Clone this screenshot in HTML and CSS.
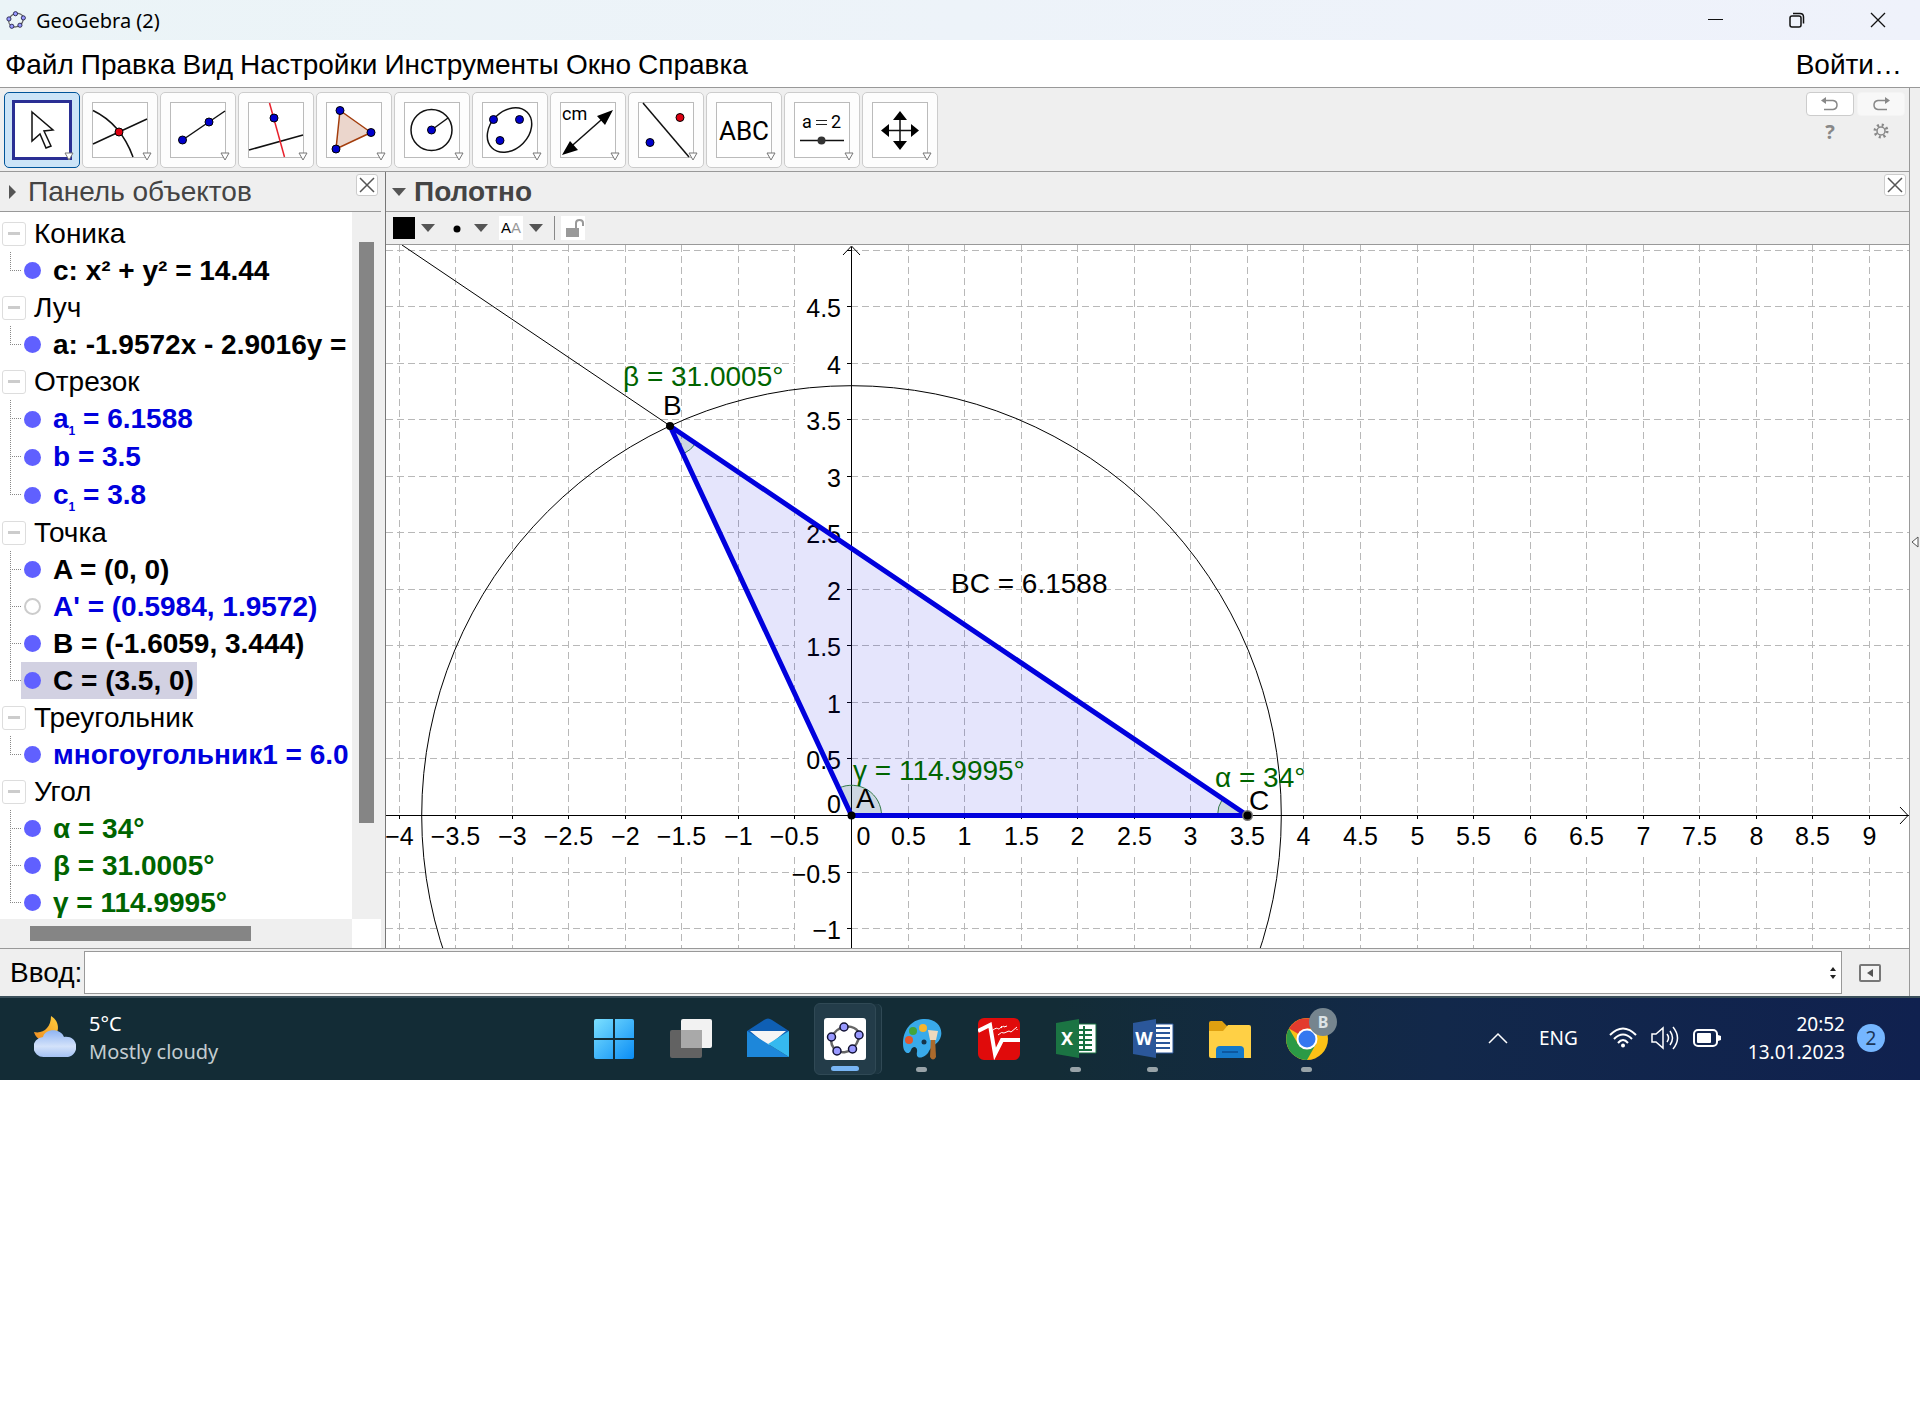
FILE: index.html
```html
<!DOCTYPE html>
<html lang="ru">
<head>
  <meta charset="UTF-8" />
  <meta name="viewport" content="width=device-width, initial-scale=1.0"/>
  <title>GeoGebra (2)</title>
  <link rel="stylesheet" href="styles.css">
</head>
<body>
  <svg class="defs" width="0" height="0" aria-hidden="true">
    <symbol id="logo" viewBox="0 0 42 42">
      <path d="M20 9C27 7 35 11 35 17C35 23 31 29 28 31C24 35 17 35 13 33C8 30 6 24 8 19C10 14 15 10 20 9Z" fill="none" stroke="#666" stroke-width="2.5"/>
      <g fill="#9999ff" stroke="#111133" stroke-width="1.5">
        <circle cx="20" cy="9" r="4"/><circle cx="35" cy="17" r="4"/><circle cx="28.500" cy="31" r="4"/><circle cx="13" cy="33" r="4"/><circle cx="7.500" cy="19" r="4"/>
      </g>
    </symbol>
    <symbol id="more" viewBox="0 0 10 9">
      <path d="M1 1H9L5 8Z" fill="#fff" stroke="#777"/>
    </symbol>
    <symbol id="cross" viewBox="0 0 20 20">
      <path d="M3 3L17 17M17 3L3 17" stroke="#555" stroke-width="1.500" fill="none"/>
    </symbol>
  </svg>

  <div class="app">
    <!-- Window title -->
    <header class="titlebar">
      <svg class="title-logo" viewBox="0 0 42 42"><use href="#logo"/></svg>
      <span class="title">GeoGebra (2)</span>
      <div class="window-buttons">
        <button aria-label="Свернуть"><svg width="16" height="16"><path d="M0 7.5H15" stroke="#111"/></svg></button>
        <button aria-label="Окно"><svg width="16" height="16" fill="none" stroke="#111" stroke-width="1.500"><rect x="1" y="4" width="11" height="11" rx="2"/><path d="M4 1.500H11Q14.500 1.500 14.500 5V11.500"/></svg></button>
        <button aria-label="Закрыть"><svg width="16" height="16" stroke="#111" stroke-width="1.300"><path d="M1 1L15 15M15 1L1 15"/></svg></button>
      </div>
    </header>

    <nav class="menu">
      <a href="#file">Файл</a>
      <a href="#edit">Правка</a>
      <a href="#view">Вид</a>
      <a href="#options">Настройки</a>
      <a href="#tools">Инструменты</a>
      <a href="#window">Окно</a>
      <a href="#help">Справка</a>
      <a href="#login" class="login">Войти…</a>
    </nav>

    <div class="body">
      <div class="main">
        <!-- Tools -->
        <div class="toolbar">
          <button class="tool selected" aria-label="Перемещать">
            <svg viewBox="0 0 60 60"><rect x="1.500" y="1.500" width="57" height="57" fill="#fff" stroke="#2a2f94" stroke-width="3"/>
              <path d="M20 12L41 30L32 31L39 46L34 48L28 34L20 41Z" fill="#fff" stroke="#111" stroke-width="1.500"/>
              <use href="#more" x="52" y="52" width="10" height="9"/></svg>
          </button>
          <button class="tool" aria-label="Точка">
            <svg viewBox="0 0 60 60"><rect class="frame" x="2.500" y="2.500" width="55" height="55"/>
              <path class="ink" d="M3 10.500Q31 24 43 57M3 44L57 19"/><circle class="red" cx="29" cy="32" r="4"/>
              <use href="#more" x="52" y="52" width="10" height="9"/></svg>
          </button>
          <button class="tool" aria-label="Прямая">
            <svg viewBox="0 0 60 60"><rect class="frame" x="2.500" y="2.500" width="55" height="55"/>
              <path class="ink" d="M14.500 40L57 11"/><circle class="blue" cx="14.500" cy="40" r="4"/><circle class="blue" cx="41" cy="22" r="4"/>
              <use href="#more" x="52" y="52" width="10" height="9"/></svg>
          </button>
          <button class="tool" aria-label="Перпендикуляр">
            <svg viewBox="0 0 60 60"><rect class="frame" x="2.500" y="2.500" width="55" height="55"/>
              <path class="ink" d="M3 50L57 35"/><path d="M23.500 3L38.500 57" stroke="#e8202c" stroke-width="1.500"/><circle class="blue" cx="28" cy="18" r="4"/>
              <use href="#more" x="52" y="52" width="10" height="9"/></svg>
          </button>
          <button class="tool" aria-label="Многоугольник">
            <svg viewBox="0 0 60 60"><rect class="frame" x="2.500" y="2.500" width="55" height="55"/>
              <path d="M16 10.500L47 32.500L12 49Z" fill="#ebd6cc" stroke="#a33d0c" stroke-width="1.500"/>
              <circle class="blue" cx="16" cy="10.500" r="4"/><circle class="blue" cx="47" cy="32.500" r="4"/><circle class="blue" cx="12" cy="49" r="4"/>
              <use href="#more" x="52" y="52" width="10" height="9"/></svg>
          </button>
          <button class="tool" aria-label="Окружность">
            <svg viewBox="0 0 60 60"><rect class="frame" x="2.500" y="2.500" width="55" height="55"/>
              <circle class="ink" cx="29.500" cy="30" r="20.500"/><path class="ink" d="M29.500 30L46 18"/><circle class="blue" cx="29.500" cy="30" r="4"/>
              <use href="#more" x="52" y="52" width="10" height="9"/></svg>
          </button>
          <button class="tool" aria-label="Эллипс">
            <svg viewBox="0 0 60 60"><rect class="frame" x="2.500" y="2.500" width="55" height="55"/>
              <ellipse class="ink" cx="29.500" cy="30" rx="25" ry="19" transform="rotate(-45 29.500 30)"/>
              <circle class="blue" cx="13.500" cy="19.500" r="4"/><circle class="blue" cx="39.500" cy="19.500" r="4"/><circle class="blue" cx="20" cy="40.500" r="4"/>
              <use href="#more" x="52" y="52" width="10" height="9"/></svg>
          </button>
          <button class="tool" aria-label="Расстояние">
            <svg viewBox="0 0 60 60"><rect class="frame" x="2.500" y="2.500" width="55" height="55"/>
              <text class="small" x="4" y="20">cm</text>
              <path class="ink" d="M8 51L51 13"/><path d="M4 55L12 41L20 50ZM55 10L39 16L47 25Z"/>
              <use href="#more" x="52" y="52" width="10" height="9"/></svg>
          </button>
          <button class="tool" aria-label="Отражение">
            <svg viewBox="0 0 60 60"><rect class="frame" x="2.500" y="2.500" width="55" height="55"/>
              <path class="ink" d="M7 3L53 57"/><circle class="red" cx="44" cy="17.500" r="4"/><circle class="blue" cx="14" cy="42.500" r="4"/>
              <use href="#more" x="52" y="52" width="10" height="9"/></svg>
          </button>
          <button class="tool" aria-label="Текст">
            <svg viewBox="0 0 60 60"><rect class="frame" x="2.500" y="2.500" width="55" height="55"/>
              <text class="big" x="30" y="40">ABC</text>
              <use href="#more" x="52" y="52" width="10" height="9"/></svg>
          </button>
          <button class="tool" aria-label="Ползунок">
            <svg viewBox="0 0 60 60"><rect class="frame" x="2.500" y="2.500" width="55" height="55"/>
              <text class="small" x="10" y="28">a</text><text class="small" x="39" y="28">2</text><path d="M24 20.500H35M24 24.500H35" stroke="#222"/>
              <path class="ink" d="M8 40.500H52"/><circle cx="29.500" cy="40.500" r="4" fill="#333"/>
              <use href="#more" x="52" y="52" width="10" height="9"/></svg>
          </button>
          <button class="tool" aria-label="Переместить чертёж">
            <svg viewBox="0 0 60 60"><rect class="frame" x="2.500" y="2.500" width="55" height="55"/>
              <path class="ink" d="M30 14V47M14 30.500H46"/><path d="M30 11L37 20H23ZM30 50L37 41H23ZM11 30.500L19 24V37ZM49 30.500L41 24V37Z"/>
              <use href="#more" x="52" y="52" width="10" height="9"/></svg>
          </button>

          <div class="actions">
            <button class="undo" aria-label="Отменить"><svg width="18" height="16" fill="none" stroke="#888" stroke-width="1.500"><path d="M3 4.500H12Q16 5 16 9Q16 13 12 13.500H3"/><path d="M0 4.500L5 1V8Z" fill="#888" stroke="none"/></svg></button>
            <button class="redo" aria-label="Повторить"><svg width="18" height="16" fill="none" stroke="#888" stroke-width="1.500"><path d="M14 4.500H6Q2 5 2 9Q2 13 6 13.500H15"/><path d="M18 4.500L13 1V8Z" fill="#888" stroke="none"/></svg></button>
            <button class="help" aria-label="Помощь">?</button>
            <button aria-label="Параметры"><svg width="16" height="16" fill="none" stroke="#888"><circle cx="8" cy="8" r="4" stroke-width="1.500"/><circle cx="8" cy="8" r="6" stroke-width="3" stroke-dasharray="2 2.710"/></svg></button>
          </div>
        </div>

        <div class="workspace">
          <!-- Object list -->
          <section class="objects">
            <div class="panel-head">
              <button class="fold" aria-label="Свернуть панель"><svg width="8" height="16"><path d="M1 1L8 8L1 15Z" fill="#555"/></svg></button>
              <h2>Панель объектов</h2>
              <button class="close" aria-label="Закрыть панель"><svg><use href="#cross"/></svg></button>
            </div>
            <div class="tree-area">
              <div class="tree">
                <h3><button aria-label="Свернуть группу"></button>Коника</h3>
                <ul>
                  <li><i></i>c: x² + y² = 14.44</li>
                </ul>
                <h3><button aria-label="Свернуть группу"></button>Луч</h3>
                <ul>
                  <li><i></i>a: -1.9572x - 2.9016y =</li>
                </ul>
                <h3><button aria-label="Свернуть группу"></button>Отрезок</h3>
                <ul class="segments def">
                  <li><i></i>a<sub>1</sub>&nbsp;= 6.1588</li>
                  <li><i></i>b = 3.5</li>
                  <li><i></i>c<sub>1</sub>&nbsp;= 3.8</li>
                </ul>
                <h3><button aria-label="Свернуть группу"></button>Точка</h3>
                <ul>
                  <li><i></i>A = (0, 0)</li>
                  <li class="def"><i class="off"></i>A' = (0.5984, 1.9572)</li>
                  <li><i></i>B = (-1.6059, 3.444)</li>
                  <li><span class="current"><i></i>C = (3.5, 0)</span></li>
                </ul>
                <h3><button aria-label="Свернуть группу"></button>Треугольник</h3>
                <ul class="def">
                  <li><i></i>многоугольник1 = 6.0</li>
                </ul>
                <h3><button aria-label="Свернуть группу"></button>Угол</h3>
                <ul class="angle">
                  <li><i></i>α = 34°</li>
                  <li><i></i>β = 31.0005°</li>
                  <li><i></i>γ = 114.9995°</li>
                </ul>
              </div>
              <div class="scroll-y"><div class="thumb"></div></div>
              <div class="scroll-x"><div class="thumb"></div></div>
            </div>
          </section>

          <!-- Drawing -->
          <section class="graphics">
            <div class="panel-head">
              <button class="fold" aria-label="Стиль"><svg width="14" height="8"><path d="M0 0H14L7 8Z" fill="#555"/></svg></button>
              <h2>Полотно</h2>
              <button class="close" aria-label="Закрыть полотно"><svg><use href="#cross"/></svg></button>
            </div>
            <div class="stylebar">
              <button aria-label="Цвет"><svg width="22" height="22"><rect width="22" height="22"/></svg><svg width="14" height="8"><path d="M0 0H14L7 8Z" fill="#555"/></svg></button>
              <button aria-label="Стиль точки"><svg width="22" height="22"><circle cx="11" cy="12" r="3.500"/></svg><svg width="14" height="8"><path d="M0 0H14L7 8Z" fill="#555"/></svg></button>
              <button aria-label="Шрифт"><span class="font-icon">A<b>A</b></span><svg width="14" height="8"><path d="M0 0H14L7 8Z" fill="#555"/></svg></button>
              <button class="lock" aria-label="Закрепить"><svg width="24" height="24"><path d="M5 12H18V21H5Z" fill="#999"/><path d="M15 12V7Q15 4 18.500 4Q22 4 22 7V10" fill="none" stroke="#999" stroke-width="2"/></svg></button>
            </div>
            <svg class="plot">
              <g id="grid"></g>
              <g id="ticks"></g>
              <g id="labels"></g>
              <path class="axis" d="M465.500 2V703M457 10L465.500 1L474 10"/>
              <line class="axis" x1="0" y1="570.500" x2="100%" y2="570.500"/>
              <svg x="100%" y="562" width="1" height="18" overflow="visible"><path class="axis" d="M-9 0L-1 8.500L-9 17"/></svg>
              <circle class="thin" cx="465.500" cy="570.500" r="429.800"/>
              <path class="thin" d="M861.500 570.500L16 0"/>
              <path class="triangle" d="M465.500 570.500L861.500 570.500L284 181Z"/>
              <g class="angles">
                <path d="M465.500 570.500H495.500A30 30 0 0 0 453 543Z"/>
                <path d="M284 181L297 209A31 31 0 0 0 310 198Z"/>
                <path d="M861.500 570.500H831.500A30 30 0 0 1 836.500 554Z"/>
              </g>
              <path class="sides" d="M465.500 570.500L861.500 570.500L284 181Z"/>
              <circle cx="861.500" cy="570.500" r="5.500" fill="#777"/>
              <circle cx="861.500" cy="570.500" r="4"/>
              <circle cx="465.500" cy="570.500" r="4"/>
              <circle cx="284" cy="181" r="4"/>
              <g class="names">
                <text x="277" y="170">B</text>
                <text x="470" y="563">A</text>
                <text x="863" y="565">C</text>
                <text x="565" y="348">BC = 6.1588</text>
                <g fill="#006400">
                  <text x="237" y="141">β = 31.0005°</text>
                  <text x="467" y="535">γ = 114.9995°</text>
                  <text x="829" y="542">α = 34°</text>
                </g>
              </g>
            </svg>
          </section>
        </div>

        <form class="inputbar">
          <label for="command">Ввод:</label>
          <div class="field">
            <input type="text" id="command">
            <button type="button" aria-label="История"><svg width="8" height="14"><path d="M4 1L7 5H1ZM4 13L7 9H1Z" fill="#222"/></svg></button>
          </div>
          <button type="button" class="input-help" aria-label="Справка по командам"><svg width="22" height="18"><rect x="1" y="1" width="20" height="16" rx="1" fill="#f4f4f4" stroke="#777" stroke-width="2"/><path d="M8 9L14 5V13Z" fill="#555"/></svg></button>
        </form>
      </div>
      <aside class="side"><button aria-label="Показать панель"><svg width="8" height="12"><path d="M7 1V11L1 6Z" fill="#fff" stroke="#555"/></svg></button></aside>
    </div>

    <!-- Taskbar -->
    <footer class="taskbar">
      <div class="weather">
        <svg width="42" height="46" viewBox="0 0 42 46">
          <defs>
            <linearGradient id="moon" x1="0" y1="1" x2="1" y2="0"><stop offset="0" stop-color="#ee8a20"/><stop offset="1" stop-color="#ffcf3d"/></linearGradient>
            <linearGradient id="cloud" x1="0" y1="0" x2="0" y2="1"><stop offset="0" stop-color="#8fb4f2"/><stop offset=".6" stop-color="#d3e2fa"/><stop offset="1" stop-color="#a4c2f4"/></linearGradient>
          </defs>
          <path d="M17 1C27 7 26 20 16 25C9 28 2 24 0 17C9 19 17 13 17 1Z" fill="url(#moon)"/>
          <path d="M10 42A10 10 0 0 1 9 22C11 13 27 13 30 22C46 20 46 42 32 42Z" fill="url(#cloud)"/>
        </svg>
        <div>5°C<br><span>Mostly cloudy</span></div>
      </div>

      <div class="apps">
        <button aria-label="Start"><svg viewBox="0 0 42 42"><defs><linearGradient id="win" x1="0" y1="0" x2="1" y2="1"><stop offset="0" stop-color="#7be0ff"/><stop offset="1" stop-color="#0a8df5"/></linearGradient></defs><path d="M1 3Q1 1 3 1H20V20H1ZM22 1H39Q41 1 41 3V20H22ZM1 22H20V41H3Q1 41 1 39ZM22 22H41V39Q41 41 39 41H22Z" fill="url(#win)"/></svg></button>
        <button aria-label="Task view"><svg viewBox="0 0 42 42"><rect x="11" y="1" width="31" height="29" rx="2" fill="#f2f2f2"/><rect y="12" width="32" height="28" rx="2" fill="#626262"/><path d="M11 12H32V30H11Z" fill="#a9a9a9"/></svg></button>
        <button aria-label="Mail"><svg viewBox="0 0 42 42"><path d="M0 13L17 2Q21 -1 25 2L42 13V20H0Z" fill="#0f5fb4"/><path d="M3 13H39L21 28Z" fill="#f5f5f5"/><path d="M0 13L42 39H0Z" fill="#1d87da"/><path d="M42 13V39L21 26Z" fill="#35b9ef"/></svg></button>
        <button class="active" aria-label="GeoGebra"><svg viewBox="0 0 42 42"><rect width="42" height="42" rx="3" fill="#fff"/><use href="#logo"/></svg></button>
        <button class="running" aria-label="Paint"><svg viewBox="0 0 42 42"><path d="M22 1C35 0 42 9 40 18C38 26 31 27 28 33C25 40 14 43 16 34C17 29 12 27 10 32C8 38 2 35 2 26C2 12 10 2 22 1Z" fill="#39aaea"/><circle cx="12" cy="13" r="4" fill="#42a53b"/><circle cx="22" cy="10" r="4" fill="#f5b52e"/><circle cx="8" cy="22" r="4" fill="#e4572d"/><circle cx="23" cy="24" r="2.500" fill="#15344a"/><path d="M30 19H34L35 39Q32 44 29 39Z" fill="#aa6a2c"/><path d="M27 12L37 13L35 22H29Z" fill="#eed9bd"/></svg></button>
        <button aria-label="PDF"><svg viewBox="0 0 42 42"><rect width="42" height="42" rx="6" fill="#e00b0b"/><path d="M0 13L12 7L17 36L24 22H42" fill="none" stroke="#fff" stroke-width="4"/><path d="M15 12Q19 9 20 11Q21 12 24 8M23 10Q26 7 26 9L29 8M20 17Q24 13 26 15L31 13L33 14L39 9M39 11V12" fill="none" stroke="#fff"/></svg></button>
        <button class="running" aria-label="Excel"><svg viewBox="0 0 42 42"><path d="M22 6H41V35H22Z" fill="#fff" stroke="#187040"/><path d="M24 12H37M24 17H37M24 22H37M24 27H37M24 32H37M29 8V33" stroke="#187040" stroke-width="2"/><path d="M1 5L24 1V40L1 36Z" fill="#1b7443"/><text x="12" y="27">X</text></svg></button>
        <button class="running" aria-label="Word"><svg viewBox="0 0 42 42"><path d="M22 6H41V35H22Z" fill="#fff" stroke="#2a5699"/><path d="M24 10H38M24 15H38M24 20H38M24 25H38M24 30H38" stroke="#2a5699" stroke-width="2"/><path d="M1 5L24 1V40L1 36Z" fill="#2b579a"/><text x="12" y="27">W</text></svg></button>
        <button aria-label="Explorer"><svg viewBox="0 0 42 42"><path d="M0 5Q0 3 2 3H13L18 8H26V16H0Z" fill="#dfa010"/><path d="M0 13H14L19 7H40Q42 7 42 9V40H2Q0 40 0 38Z" fill="#ffd045"/><path d="M7 40V32Q7 28 11 28H31Q35 28 35 32V40Z" fill="#1579c9"/><path d="M13 34H29" stroke="#0c58a0" stroke-width="2"/></svg></button>
        <button class="running" aria-label="Chrome"><svg viewBox="0 0 42 42"><circle cx="21" cy="21" r="21" fill="#fbc116"/><path d="M21 21L3 10.500A21 21 0 0 1 39.200 10.500H21Z" fill="#e33b2e"/><path d="M3 10.500A21 21 0 0 0 21 42L30 26H12Z" fill="#2b9a46"/><circle cx="21" cy="21" r="10.500" fill="#fff"/><circle cx="21" cy="21" r="8.500" fill="#3478f0"/></svg><span class="profile">B</span></button>
      </div>

      <div class="tray">
        <button aria-label="Hidden icons"><svg width="20" height="12" fill="none" stroke="#fff" stroke-width="1.500"><path d="M1 11L10 2L19 11"/></svg></button>
        <button class="lang">ENG</button>
        <button class="status" aria-label="Network, volume, battery">
          <svg width="28" height="22" fill="none" stroke="#fff" stroke-width="2"><path d="M1 8Q14 -5 27 8M5 12Q14 3 23 12M9 16Q14 10 19 16"/><circle cx="14" cy="18.500" r="2" fill="#fff" stroke="none"/></svg>
          <svg width="28" height="24" fill="none" stroke="#fff" stroke-width="1.500"><path d="M1 8H5L12 2V22L5 16H1ZM16 8Q19 12 16 16M19 5Q24 12 19 19M22 1Q31 12 22 23"/></svg>
          <svg width="28" height="18"><rect x="1" y="1" width="23" height="16" rx="4" fill="none" stroke="#fff" stroke-width="2"/><rect x="4" y="4" width="14" height="10" rx="1" fill="#fff"/><path d="M25 6L28 7V11L25 12Z" fill="#fff"/></svg>
        </button>
        <div class="clock">20:52<br>13.01.2023</div>
        <span class="count">2</span>
      </div>
    </footer>
  </div>

  <script>
    const NS = 'http://www.w3.org/2000/svg';
    const grid = document.getElementById('grid');
    const ticks = document.getElementById('ticks');
    const labels = document.getElementById('labels');
    const ox = 465, oy = 570, unit = 113.1, bottom = 703;

    function line(parent, x1, y1, x2, y2) {
      const el = document.createElementNS(NS, 'line');
      el.setAttribute('x1', x1);
      el.setAttribute('y1', y1);
      el.setAttribute('x2', x2);
      el.setAttribute('y2', y2);
      parent.appendChild(el);
    }

    function label(value, x, y, anchor) {
      const el = document.createElementNS(NS, 'text');
      el.setAttribute('x', x);
      el.setAttribute('y', y);
      el.setAttribute('text-anchor', anchor);
      el.textContent = String(value).replace('-', '−');
      labels.appendChild(el);
    }

    // vertical lines leave a gap for the numbers under the axis
    for (let v = -4; v <= 9; v += 0.5) {
      const x = Math.round(ox + v * unit) + 0.5;
      if (v === 0) {
        label(0, x + 12, 600, 'middle');
        continue;
      }
      line(grid, x, 0, x, oy);
      line(grid, x, 612, x, bottom);
      line(ticks, x, oy, x, oy + 4);
      label(v, x, 600, 'middle');
    }

    for (let v = -1; v <= 5; v += 0.5) {
      const y = Math.round(oy - v * unit) + 0.5;
      if (v === 0) {
        label(0, ox - 10, y - 3, 'end');
        continue;
      }
      line(grid, 0, y, 409, y);
      line(grid, ox, y, '100%', y);
      line(ticks, ox - 4, y, ox, y);
      if (v < 5) label(v, ox - 10, y + 10, 'end');
    }
  </script>
</body>
</html>
```
FILE: styles.css
```css
* {
  margin: 0;
  padding: 0;
  box-sizing: border-box;
}

body {
  background: #fff;
  color: #000;
  font-family: "Liberation Sans", Arial, sans-serif;
  font-size: 28px;
}

button {
  background: none;
  border: none;
  font: inherit;
  color: inherit;
}

svg {
  display: block;
}

.defs {
  position: absolute;
}

.titlebar {
  display: flex;
  align-items: center;
  height: 40px;
  padding-left: 5px;
  background: linear-gradient(90deg, #ebf4f7, #eff2fb);
  font-family: "Noto Sans", sans-serif;
  font-size: 20px;
}

.title-logo {
  width: 22px;
  height: 22px;
  margin-right: 9px;
}

.window-buttons {
  display: flex;
  margin-left: auto;
}

.window-buttons button {
  display: flex;
  justify-content: center;
  width: 81px;
}

.window-buttons button:last-child {
  margin-right: 2px;
}

.menu {
  display: flex;
  align-items: center;
  gap: 7px;
  height: 48px;
  padding: 2px 18px 0 5px;
  border-bottom: 1px solid #999;
}

.menu a {
  color: #000;
  text-decoration: none;
}

.menu .login {
  margin-left: auto;
}

.body {
  display: flex;
  background: #efefef;
}

.main {
  flex: 1;
  min-width: 0;
}

.side {
  display: flex;
  align-items: center;
  justify-content: center;
  width: 11px;
  border-left: 1px solid #999;
}

/* tools */
.toolbar {
  display: flex;
  gap: 2px;
  height: 84px;
  padding: 4px;
  border-bottom: 1px solid #999;
}

.tool {
  width: 76px;
  height: 76px;
  padding: 7px;
  background: #fdfdfd;
  border: 1px solid #ccc;
  border-radius: 5px;
}

.tool.selected {
  background: #cce4f7;
  border-color: #005499;
}

.tool svg {
  width: 60px;
  height: 60px;
  overflow: visible;
}

.frame {
  fill: #fff;
  stroke: #bbb;
}

.ink {
  fill: none;
  stroke: #111;
  stroke-width: 1.5;
}

.blue,
.red {
  fill: #0000cc;
  stroke: #000;
}

.red {
  fill: #dd0011;
}

.tool text {
  font-family: Roboto, sans-serif;
}

.small {
  font-size: 18px;
}

.big {
  font-size: 26px;
  text-anchor: middle;
}

.actions {
  display: grid;
  grid-template-columns: 48px 48px;
  grid-auto-rows: 24px;
  gap: 3px;
  margin-left: auto;
}

.actions button {
  display: flex;
  align-items: center;
  justify-content: center;
  border-radius: 4px;
}

.actions .undo,
.actions .redo {
  background: #fff;
  border: 1px solid #ccc;
}

.actions .redo {
  background: #f8f8f8;
  border-color: #f4f4f4;
}

.actions .help {
  color: #888;
  font-family: "Noto Sans", sans-serif;
  font-size: 20px;
  font-weight: bold;
}

/* panels */
.workspace {
  display: flex;
  gap: 4px;
  height: 777px;
  border-bottom: 1px solid #999;
}

.objects {
  display: flex;
  flex-direction: column;
  width: 381px;
}

.graphics {
  display: flex;
  flex-direction: column;
  flex: 1;
  min-width: 0;
  border-left: 1px solid #777;
}

.panel-head {
  display: flex;
  align-items: center;
  height: 40px;
  padding-right: 3px;
  border-bottom: 1px solid #999;
  color: #444;
}

.panel-head h2 {
  font-size: 28px;
  font-weight: normal;
}

.graphics .panel-head h2 {
  font-weight: bold;
}

.fold {
  display: flex;
  justify-content: center;
  width: 28px;
}

.objects .fold {
  padding-right: 4px;
}

.graphics .fold {
  padding-right: 2px;
}

.close {
  align-self: flex-start;
  width: 22px;
  height: 22px;
  margin-top: 2px;
  margin-left: auto;
  background: #fff;
  border: 1px solid #ccc;
  border-radius: 3px;
}

.close svg {
  width: 20px;
  height: 20px;
}

.tree-area {
  display: grid;
  flex: 1;
  grid-template-columns: 1fr 29px;
  grid-template-rows: 1fr 29px;
  min-height: 0;
  background: #fff;
}

.tree {
  min-width: 0;
  min-height: 0;
  padding-top: 3px;
  overflow: hidden;
  white-space: nowrap;
}

.tree h3 {
  display: flex;
  align-items: center;
  gap: 8px;
  height: 37px;
  padding-left: 2px;
  font-size: 28px;
  font-weight: normal;
}

.tree h3 button {
  width: 24px;
  height: 24px;
  padding: 5px;
  border: 1px solid #ddd;
  border-radius: 3px;
}

.tree h3 button::before {
  content: "";
  display: block;
  height: 3px;
  background: #ccc;
}

.tree ul {
  padding-left: 10px;
  list-style: none;
  font-weight: bold;
}

/* dotted branches of the tree */
.tree li {
  display: flex;
  align-items: center;
  height: 37px;
  padding-left: 14px;
  background:
    repeating-linear-gradient(90deg, #888 0 1px, transparent 1px 2px) 0 18px / 11px 1px no-repeat,
    repeating-linear-gradient(#888 0 1px, transparent 1px 2px) 0 0 / 1px 100% no-repeat;
}

.tree li:last-child {
  background-size: 11px 1px, 1px 19px;
}

.tree .segments li {
  height: 38px;
}

.tree i {
  flex-shrink: 0;
  width: 17px;
  height: 17px;
  margin-right: 12px;
  background: #6060ff;
  border-radius: 50%;
}

.tree i.off {
  background: #fff;
  border: 2px solid #ccc;
}

.tree sub {
  align-self: flex-end;
  font-size: 12px;
}

.current {
  display: flex;
  align-items: center;
  height: 37px;
  margin-left: -3px;
  padding: 0 3px;
  background: #d2d1e2;
}

.def {
  color: #0000dd;
}

.angle {
  color: #006400;
}

.scroll-y {
  padding: 30px 7px 96px;
  background: #efefef;
}

.scroll-x {
  padding: 7px 101px 7px 30px;
  background: #efefef;
}

.thumb {
  height: 100%;
  background: #858585;
}

.stylebar {
  display: flex;
  align-items: center;
  gap: 8px;
  height: 33px;
  padding-left: 7px;
  border-bottom: 1px solid #999;
}

.stylebar button {
  display: flex;
  align-items: center;
  gap: 6px;
  margin-right: 3px;
}

.stylebar .lock {
  background: linear-gradient(#fff, #fff) 6px 0 no-repeat;
  border-left: 1px solid #888;
  padding-left: 6px;
}

.font-icon {
  width: 24px;
  background: #fff;
  font-size: 15px;
  line-height: 24px;
}

.font-icon b {
  color: #999;
  font-weight: normal;
}

/* drawing */
.plot {
  flex: 1;
  width: 100%;
  min-height: 0;
  background: #fff;
}

#grid {
  stroke: #b8b8b8;
  stroke-dasharray: 7 4;
}

#ticks {
  stroke: #000;
}

#labels {
  font-size: 25px;
}

.axis {
  fill: none;
  stroke: #000;
}

.thin {
  fill: none;
  stroke: #000;
}

.triangle {
  fill: #0000dd;
  fill-opacity: .1;
}

.sides {
  fill: none;
  stroke: #0000dd;
  stroke-width: 5;
  stroke-linejoin: round;
}

.angles {
  fill: #006400;
  fill-opacity: .1;
  stroke: #347a4a;
}

/* input line */
.inputbar {
  display: flex;
  align-items: center;
  height: 47px;
  padding-left: 10px;
}

.field {
  display: flex;
  align-items: center;
  flex: 1;
  height: 43px;
  margin-left: 2px;
  background: #fff;
  border: 1px solid #999;
}

.field input {
  flex: 1;
  height: 41px;
  padding: 0 4px;
  border: none;
  outline: none;
  font: inherit;
}

.field button {
  width: 12px;
}

.input-help {
  width: 67px;
  padding-left: 17px;
}

/* taskbar */
.taskbar {
  display: grid;
  grid-template-columns: 1fr auto 1fr;
  align-items: center;
  height: 84px;
  background: linear-gradient(90deg, #132c36 55%, #12284a 75%, #10214f);
  border-top: 2px solid #3b505b;
  color: #fff;
  font-family: "Noto Sans", sans-serif;
  font-size: 19px;
  line-height: 28px;
}

.weather {
  display: flex;
  align-items: center;
  gap: 13px;
  padding: 0 0 2px 34px;
  font-size: 20px;
}

.weather span {
  color: #c3ccd0;
}

.apps {
  display: flex;
}

.apps button {
  position: relative;
  display: flex;
  align-items: center;
  justify-content: center;
  width: 77px;
  height: 72px;
}

.apps svg {
  width: 42px;
  height: 42px;
}

.apps text {
  fill: #fff;
  font-size: 18px;
  font-weight: bold;
  text-anchor: middle;
}

.apps .active {
  width: 62px;
  margin: 0 7px 0 8px;
  background: #233c49;
  border: 1px solid #304955;
  border-radius: 6px;
  box-shadow: 6px 0 0 -1px #1b343f, 7px 0 0 -1px #304955;
}

.running::after,
.active::after {
  content: "";
  position: absolute;
  bottom: 3px;
  width: 11px;
  height: 5px;
  background: #98a3a8;
  border-radius: 3px;
}

.active::after {
  width: 28px;
  background: #78b5f5;
}

.profile {
  position: absolute;
  top: 5px;
  right: 8px;
  width: 28px;
  height: 28px;
  background: #76858f;
  border-radius: 50%;
  color: #dde3e6;
  font-size: 16px;
  font-weight: bold;
}

.tray {
  display: flex;
  align-items: center;
  justify-content: flex-end;
  padding: 0 35px 2px 0;
}

.lang {
  margin: 0 31px;
}

.status {
  display: flex;
  align-items: center;
  gap: 14px;
  margin-right: 27px;
}

.clock {
  text-align: right;
}

.count {
  width: 28px;
  height: 28px;
  margin-left: 12px;
  background: #75b6ff;
  border-radius: 50%;
  color: #1b3556;
  text-align: center;
}
```
